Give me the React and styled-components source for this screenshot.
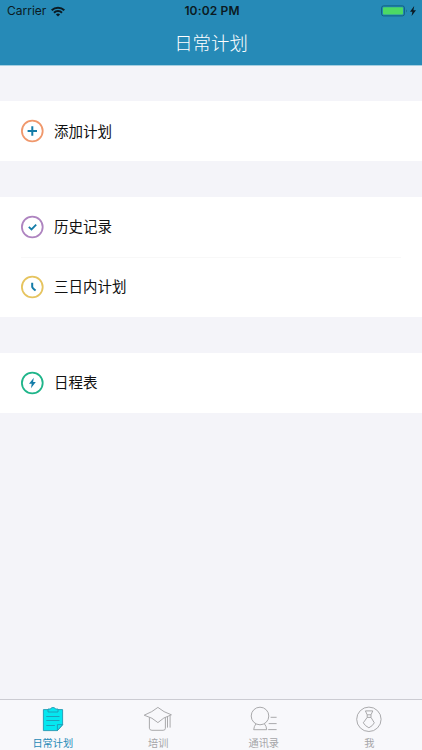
import React from 'react'
import styled, { createGlobalStyle } from 'styled-components'

const GlobalStyle = createGlobalStyle`
  * {
    box-sizing: border-box;
  }
  body {
    margin: 0;
    background: #f4f4f9;
    font-family: Inter, 'Noto Sans CJK SC', sans-serif;
  }
  svg {
    display: block;
    flex: none;
  }
`

const UI = {
  Page: styled.div`
    height: 100vh;
    display: flex;
    flex-direction: column;
    overflow: hidden;
  `,
  Header: styled.header`
    height: 66px;
    flex: none;
    background: #268ab7;
    border-bottom: 1px solid #a6cfe1;
  `,
  StatusBar: styled.div`
    height: 22px;
    padding: 0 5px 0 7px;
    display: grid;
    grid-template-columns: 1fr auto 1fr;
    align-items: center;
    color: #0b1a22;
    font-size: 12px;
    line-height: 22px;
  `,
  Carrier: styled.div`
    display: flex;
    align-items: center;
    gap: 5px;
    letter-spacing: 0;
  `,
  Time: styled.div`
    font-weight: 600;
    letter-spacing: 0.15px;
  `,
  Battery: styled.div`
    display: flex;
    justify-content: flex-end;
  `,
  Title: styled.h1`
    margin: 0;
    height: 43px;
    color: #fff;
    font-size: 18.4px;
    font-weight: 300;
    line-height: 42px;
    text-align: center;
  `,
  Content: styled.main`
    flex: 1;
    padding-top: 35px;
    display: flex;
    flex-direction: column;
    gap: 36px;
  `,
  Group: styled.section`
    background: #fff;
  `,
  Row: styled.div`
    height: 60px;
    margin: 0 21px;
    display: flex;
    align-items: center;
    gap: 10px;
    color: #111;
    font-size: 14.5px;

    &:not(:last-child) {
      height: 59.5px;
      box-shadow: 0 1px #f8f8f8;
    }
  `,
  RowLabel: styled.span`
    padding-bottom: 2px;
  `,
  TabBar: styled.nav`
    height: 51px;
    flex: none;
    display: grid;
    grid-template-columns: repeat(4, 1fr);
    border-top: 1px solid #cbcbd2;
    background: #f8f8fb;
  `,
  Tab: styled.div`
    display: flex;
    flex-direction: column;
    align-items: center;
    padding-top: 5px;
    color: ${({ $active }) => ($active ? '#268ab7' : '#a5a5a8')};
    font-size: 10.2px;
    line-height: 16px;
  `,
  TabLabel: styled.span`
    margin-top: 2px;
  `,
}

const RowIcon = ({ color, children }) => (
  <svg width="23" height="24" viewBox="0 0 23 24" fill="none">
    <circle cx="11.3" cy="12" r="10.4" stroke={color} strokeWidth="1.8" />
    {children}
  </svg>
)

const PlusIcon = () => (
  <RowIcon color="#f0986c">
    <path d="M11.3 7.3v9.4M6.6 12h9.4" stroke="#147ca8" strokeWidth="2" />
  </RowIcon>
)

const CheckIcon = () => (
  <RowIcon color="#ae84c0">
    <path d="M7.8 11.8l2.7 2.6 4.7-4.8" stroke="#147ca8" strokeWidth="1.8" />
  </RowIcon>
)

const ClockIcon = () => (
  <RowIcon color="#e6c45f">
    <path d="M11.2 7.8v4q0 1.2 3.4 3.7" stroke="#147ca8" strokeWidth="2" />
  </RowIcon>
)

const BoltIcon = () => (
  <RowIcon color="#1fb58a">
    <path d="M12.8 6.8L8 12.7h2.7L10 17.3l4.8-6.2h-2.7z" fill="#147ca8" />
  </RowIcon>
)

const WifiIcon = () => (
  <svg width="14" height="11" viewBox="0 0 14 11" fill="none" stroke="#0b1a22" strokeWidth="2">
    <path d="M.7 4.2a9 9 0 0 1 12.6 0M3 6.7a5.7 5.7 0 0 1 8 0" />
    <path d="M7 10.6L4.9 8.5a3 3 0 0 1 4.2 0z" fill="#0b1a22" stroke="none" />
  </svg>
)

const BatteryIcon = () => (
  <svg width="36" height="12" viewBox="0 0 36 12">
    <rect x=".6" y=".9" width="22.8" height="10" rx="2" fill="#268ab7" stroke="#126180" />
    <rect x="2" y="2.3" width="20" height="7.2" rx=".8" fill="#4cd964" />
    <path d="M25 4.2q1.4 1.7 0 3.4z" fill="#126180" />
    <path d="M33.2 1L29 6.7h2.4L30.6 11 35 5.2h-2.6z" fill="#0b1a22" />
  </svg>
)

const ClipboardIcon = () => (
  <svg width="26" height="28" viewBox="0 0 26 28" stroke="#2297b2" strokeWidth=".9">
    <path d="M3.4 4.6h19.2v15.2L17.4 25.6H3.4z" fill="#05e7f0" />
    <path d="M8 7V4h2.5Q10.8 2.5 13 2.5T15.5 4H18v3z" fill="#05e7f0" />
    <path d="M22.6 19.6h-5.2v6z" fill="#05e7f0" />
    <path d="M6.3 11.5h13.2M6.3 15.5h13.2M6.3 20.5h8.6" fill="none" />
  </svg>
)

const CapIcon = () => (
  <svg width="30" height="28" viewBox="0 0 30 28" fill="none" stroke="#a0a0a3" strokeWidth=".9">
    <path d="M1.2 10.2Q9.4 7 14.9 2.4q5.6 4.8 13.5 7.4-8.4 2.6-13.5 7.8-5.1-5-13.7-7.4z" />
    <path d="M6.4 12.4v10.9q.3 2 2.5 2h11.2q2.3 0 2.3-2V12.4M24.5 11.6v11M27.1 10.6v12" />
  </svg>
)

const ContactsIcon = () => (
  <svg width="28" height="28" viewBox="0 0 28 28" fill="none" stroke="#a0a0a3" strokeWidth=".9">
    <circle cx="10" cy="11" r="8.8" />
    <path d="M6 18.8q-2 2.4-2.3 5.9h13q-.2-3.5-2.3-5.9M20.6 12.3h6M18.7 18.6h7.9M18.2 24.6h8.4" />
  </svg>
)

const MeIcon = () => (
  <svg width="28" height="28" viewBox="0 0 28 28" fill="none" stroke="#a0a0a3" strokeWidth=".9">
    <circle cx="13.9" cy="14.3" r="12.2" />
    <path d="M10.4 5.9h7.4L16 9.8h-3.8zM12.2 9.8v2.6L8.3 17.8q1.7 3.2 5.6 5 3.8-1.8 5.4-5L16 12.4V9.8M12.2 12.4H16" />
  </svg>
)

const groups = [
  [{ icon: PlusIcon, label: '添加计划' }],
  [
    { icon: CheckIcon, label: '历史记录' },
    { icon: ClockIcon, label: '三日内计划' },
  ],
  [{ icon: BoltIcon, label: '日程表' }],
]

const tabs = [
  { icon: ClipboardIcon, label: '日常计划', active: true },
  { icon: CapIcon, label: '培训' },
  { icon: ContactsIcon, label: '通讯录' },
  { icon: MeIcon, label: '我' },
]

const App = () => (
  <UI.Page>
    <GlobalStyle />
    <UI.Header>
      <UI.StatusBar>
        <UI.Carrier>
          Carrier
          <WifiIcon />
        </UI.Carrier>
        <UI.Time>10:02 PM</UI.Time>
        <UI.Battery>
          <BatteryIcon />
        </UI.Battery>
      </UI.StatusBar>
      <UI.Title>日常计划</UI.Title>
    </UI.Header>
    <UI.Content>
      {groups.map((rows, i) => (
        <UI.Group key={i}>
          {rows.map(({ icon: Icon, label }) => (
            <UI.Row key={label}>
              <Icon />
              <UI.RowLabel>{label}</UI.RowLabel>
            </UI.Row>
          ))}
        </UI.Group>
      ))}
    </UI.Content>
    <UI.TabBar>
      {tabs.map(({ icon: Icon, label, active }) => (
        <UI.Tab key={label} $active={active}>
          <Icon />
          <UI.TabLabel>{label}</UI.TabLabel>
        </UI.Tab>
      ))}
    </UI.TabBar>
  </UI.Page>
)

export default App
